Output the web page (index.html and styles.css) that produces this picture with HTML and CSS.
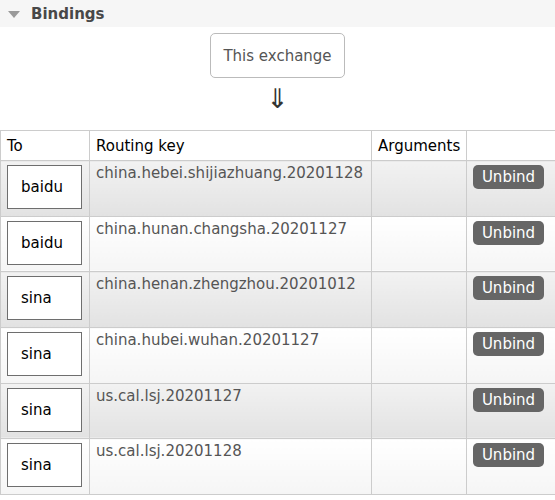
FILE: index.html
```html
<!DOCTYPE html>
<html>
<head>
<meta charset="utf-8">
<link rel="stylesheet" href="styles.css">
</head>
<body>
<div class="section-head">
  <span class="tri"></span>
  <span class="title">Bindings</span>
</div>
<div class="flow">
  <div class="exchange">This exchange</div>
  <div class="arrow">&#8659;</div>
</div>
<table class="list">
  <thead>
    <tr><th class="c-to">To</th><th class="c-key">Routing key</th><th class="c-args">Arguments</th><th class="c-act"></th></tr>
  </thead>
  <tbody>
    <tr class="alt1"><td><span class="queue">baidu</span></td><td>china.hebei.shijiazhuang.20201128</td><td></td><td><button class="btn">Unbind</button></td></tr>
    <tr class="alt2"><td><span class="queue">baidu</span></td><td>china.hunan.changsha.20201127</td><td></td><td><button class="btn">Unbind</button></td></tr>
    <tr class="alt1"><td><span class="queue">sina</span></td><td>china.henan.zhengzhou.20201012</td><td></td><td><button class="btn">Unbind</button></td></tr>
    <tr class="alt2"><td><span class="queue">sina</span></td><td>china.hubei.wuhan.20201127</td><td></td><td><button class="btn">Unbind</button></td></tr>
    <tr class="alt1"><td><span class="queue">sina</span></td><td>us.cal.lsj.20201127</td><td></td><td><button class="btn">Unbind</button></td></tr>
    <tr class="alt2"><td><span class="queue">sina</span></td><td>us.cal.lsj.20201128</td><td></td><td><button class="btn">Unbind</button></td></tr>
  </tbody>
</table>
</body>
</html>
```
FILE: styles.css
```css
html, body {
  margin: 0;
  padding: 0;
  background: #fff;
  overflow: hidden;
}
body {
  font-family: "DejaVu Sans", Verdana, sans-serif;
  font-size: 15px;
  color: #333;
}
.section-head {
  height: 27px;
  background: #f6f6f6;
  display: flex;
  align-items: center;
  padding-left: 8px;
}
.tri {
  width: 0;
  height: 0;
  border-left: 6px solid transparent;
  border-right: 6px solid transparent;
  border-top: 7px solid #9a9a9a;
  margin-right: 11px;
  margin-top: 1px;
}
.title {
  font-weight: bold;
  font-size: 15px;
  color: #484848;
}
.flow {
  display: flex;
  flex-direction: column;
  align-items: center;
  padding-top: 6px;
  height: 103px;
  box-sizing: border-box;
}
.exchange {
  width: 135px;
  height: 45px;
  box-sizing: border-box;
  border: 1px solid #bbb;
  border-radius: 5px;
  display: flex;
  align-items: center;
  justify-content: center;
  font-size: 15px;
  color: #555;
}
.arrow {
  font-size: 27px;
  line-height: 30px;
  margin-top: 6px;
  color: #333;
}
table.list {
  border-collapse: collapse;
  width: 580px;
  table-layout: fixed;
}
table.list th, table.list td {
  border: 1px solid #ccc;
  vertical-align: top;
  text-align: left;
}
table.list th {
  font-weight: normal;
  font-size: 15px;
  color: #000;
  height: 30px;
  padding: 0 6px;
  vertical-align: middle;
  box-sizing: border-box;
}
.c-to { width: 89px; }
.c-key { width: 282px; }
.c-args { width: 95px; }
table.list td {
  height: 55.7px;
  padding: 3px 6px 0 6px;
  box-sizing: border-box;
  color: #555;
  font-size: 15px;
}
tr.alt1 td { background: linear-gradient(to bottom, #f2f2f2 0%, #e2e2e2 100%); }
tr.alt2 td { background: linear-gradient(to bottom, #ffffff 0%, #f5f5f5 100%); }
.queue {
  display: flex;
  align-items: center;
  width: 75px;
  height: 44px;
  margin-top: 1px;
  box-sizing: border-box;
  border: 1px solid #6e6e6e;
  background: #fff;
  padding-left: 13px;
  color: #000;
  font-size: 15px;
}
.btn {
  display: block;
  margin-top: 1px;
  width: 71px;
  height: 24px;
  border: none;
  border-radius: 5px;
  background: #666;
  color: #fff;
  font-family: "DejaVu Sans", Verdana, sans-serif;
  font-size: 15px;
  padding: 0;
}
```
